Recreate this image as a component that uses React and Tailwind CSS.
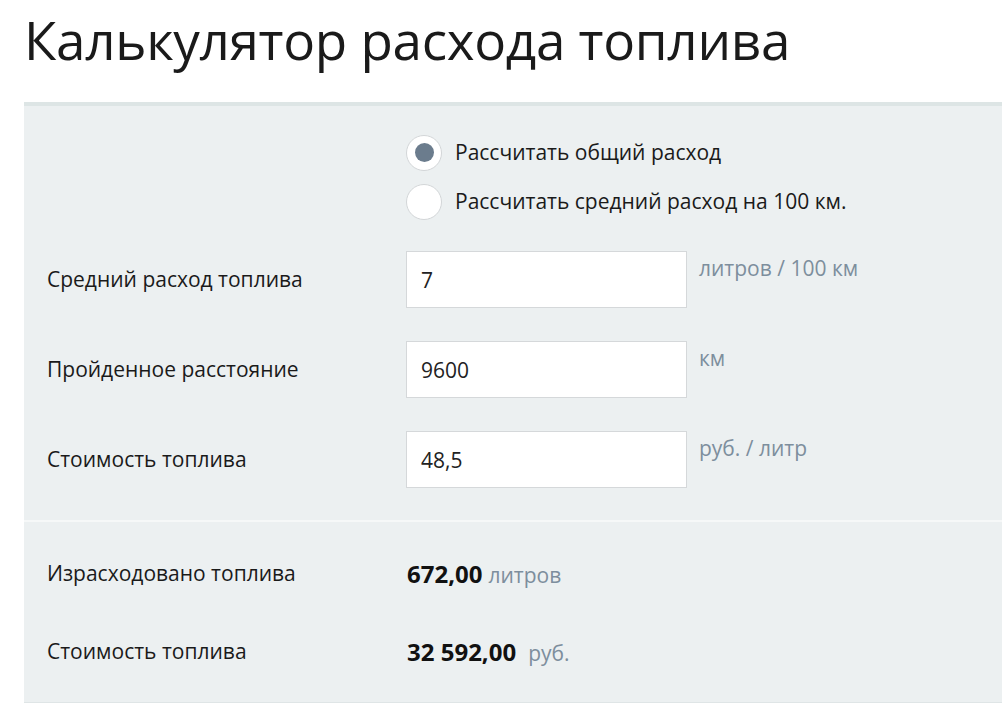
import React, { useState } from 'react';

const font = { fontFamily: '"Open Sans", "Noto Sans", sans-serif' };

function Radio({ checked, label, onClick }) {
  return (
    <button type="button" onClick={onClick} className="flex items-center gap-[13px] h-[49px] text-left">
      <span className="w-[36px] h-[36px] rounded-full bg-white border border-[#d3d6d8] flex items-center justify-center">
        {checked && <span className="w-[19px] h-[19px] rounded-full bg-[#6b7c8d]"></span>}
      </span>
      <span className="text-[21px] text-[#1a1a1a]">{label}</span>
    </button>
  );
}

function Field({ label, value, unit }) {
  return (
    <div className="flex items-start">
      <div className="w-[359px] h-[57px] flex items-center text-[21px] text-[#1a1a1a]">{label}</div>
      <input
        type="text"
        defaultValue={value}
        className="w-[281px] h-[57px] bg-white border border-[#d5d8da] px-[14px] text-[21px] text-[#222] outline-none"
      />
      <div className="ml-[12px] pt-[2px] text-[21px] text-[#7d8e9d]">{unit}</div>
    </div>
  );
}

export default function App() {
  const [mode, setMode] = useState('total');

  return (
    <div className="w-[1002px] h-[703px] bg-white overflow-hidden" style={font}>
      {/* Header */}
      <div className="h-[102px] pl-[24px] pt-[8px]">
        <h1 className="text-[53px] leading-[64px] font-normal text-[#1a1a1a] tracking-[-0.3px]">Калькулятор расхода топлива</h1>
      </div>

      {/* Panel */}
      <div className="ml-[24px] bg-[#ecf0f1] border-t-4 border-[#dde5e5]">
        <div className="pl-[23px] pt-[22px] pb-[32px] border-b-2 border-[#f6f8f8]">
          <div className="pl-[359px] flex flex-col">
            <Radio checked={mode === 'total'} label="Рассчитать общий расход" onClick={() => setMode('total')} />
            <Radio checked={mode === 'avg'} label="Рассчитать средний расход на 100 км." onClick={() => setMode('avg')} />
          </div>
          <div className="mt-[25px] flex flex-col gap-[33px]">
            <Field label="Средний расход топлива" value="7" unit="литров / 100 км" />
            <Field label="Пройденное расстояние" value="9600" unit="км" />
            <Field label="Стоимость топлива" value="48,5" unit="руб. / литр" />
          </div>
        </div>

        {/* Results */}
        <div className="pl-[23px] pt-[38px] pb-[36px] border-b border-[#dfe5e6] flex flex-col gap-[50px]">
          <div className="flex items-center h-[28px]">
            <div className="w-[360px] text-[21px] text-[#1a1a1a]">Израсходовано топлива</div>
            <div className="flex items-baseline">
              <span className="text-[24px] font-bold text-[#111]">672,00</span>
              <span className="ml-[6px] text-[21px] text-[#7d8e9d]">литров</span>
            </div>
          </div>
          <div className="flex items-center h-[28px]">
            <div className="w-[360px] text-[21px] text-[#1a1a1a]">Стоимость топлива</div>
            <div className="flex items-baseline">
              <span className="text-[24px] font-bold text-[#111]">32 592,00</span>
              <span className="ml-[12px] text-[21px] text-[#7d8e9d]">руб.</span>
            </div>
          </div>
        </div>
      </div>
    </div>
  );
}
